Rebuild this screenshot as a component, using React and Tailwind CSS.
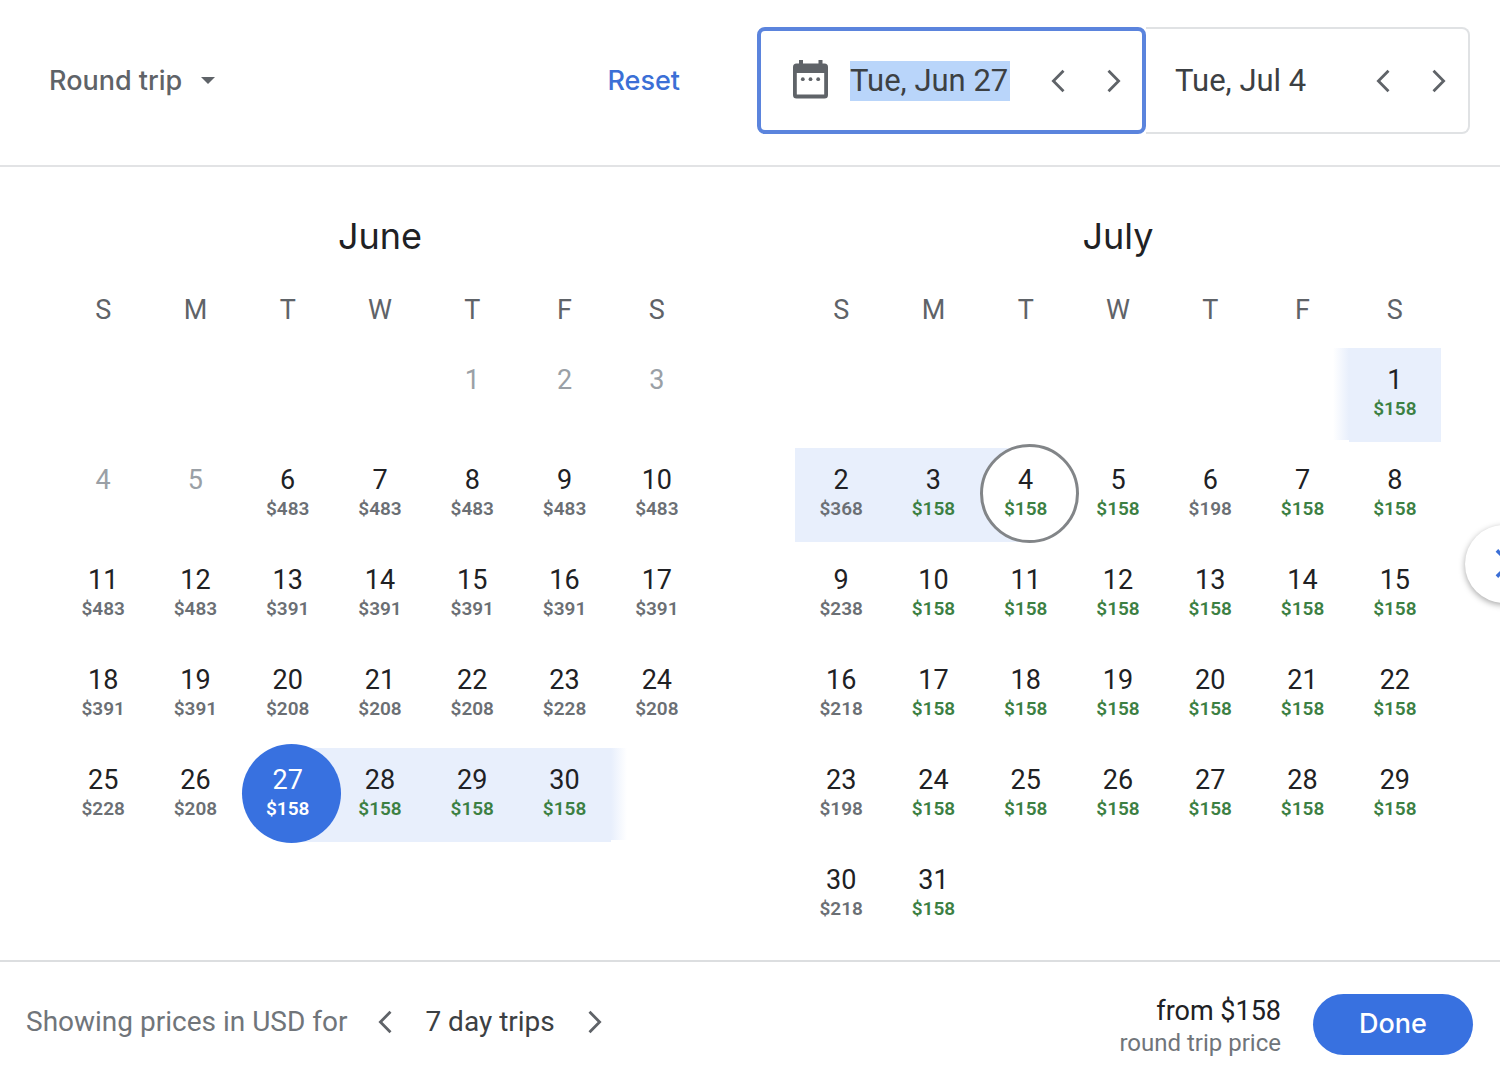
import { useState } from "react";
import clsx from "clsx";

const WEEKDAYS = ["S", "M", "T", "W", "T", "F", "S"];
const LOW_PRICE = 158;

// ── Price data ────────────────────────────────────────────────────────────────
const MONTHS = [
  {
    name: "June",
    startDay: 4,
    // null = date in the past, no price
    prices: [
      null, null, null, null, null, 483, 483, 483, 483, 483,
      483, 483, 391, 391, 391, 391, 391, 391, 391, 208,
      208, 208, 228, 208, 228, 208, 158, 158, 158, 158,
    ],
    departure: 27,
    range: [27, 30],
    fadeAfter: 30,
  },
  {
    name: "July",
    startDay: 6,
    prices: [
      158, 368, 158, 158, 158, 198, 158, 158, 238, 158,
      158, 158, 158, 158, 158, 218, 158, 158, 158, 158,
      158, 158, 198, 158, 158, 158, 158, 158, 158, 218,
      158,
    ],
    arrival: 4,
    range: [1, 4],
    fadeBefore: 1,
  },
];

function getWeeks(month) {
  const cells = [
    ...Array(month.startDay).fill(null),
    ...month.prices.map((price, i) => ({ day: i + 1, price })),
  ];
  while (cells.length % 7 !== 0) cells.push(null);

  const weeks = [];
  for (let i = 0; i < cells.length; i += 7) weeks.push(cells.slice(i, i + 7));
  return weeks;
}

// ── Icons ─────────────────────────────────────────────────────────────────────
function Chevron({ direction, className = "w-[14px] h-[24px]" }) {
  return (
    <svg
      viewBox="0 0 14 24"
      className={className}
      fill="none"
      stroke="currentColor"
      strokeWidth="2.8"
      aria-hidden="true"
    >
      <path
        d={direction === "left" ? "M12.5 1.8 2.4 12l10.1 10.2" : "M1.5 1.8 11.6 12 1.5 22.2"}
      />
    </svg>
  );
}

function CalendarIcon() {
  return (
    <svg viewBox="0 0 35 41" className="w-[35px] h-[41px] shrink-0 text-[#5f6368]" fill="currentColor" aria-hidden="true">
      <path
        fillRule="evenodd"
        d="M6 0h4v3.500h15.500V0h4v3.500h2A3.500 3.500 0 0 1 35 7v28a3.500 3.500 0 0 1-3.500 3.500h-28A3.500 3.500 0 0 1 0 35V7a3.500 3.500 0 0 1 3.500-3.500H6zM3.800 13v21.500h27.400V13z"
      />
      <circle cx="9.800" cy="19.200" r="1.900" />
      <circle cx="17.500" cy="19.200" r="1.900" />
      <circle cx="25.200" cy="19.200" r="1.900" />
    </svg>
  );
}

function StepButton({ direction, label }) {
  return (
    <button
      type="button"
      aria-label={label}
      className="flex items-center justify-center w-8 h-10 text-[#5f6368]"
    >
      <Chevron direction={direction} />
    </button>
  );
}

// ── Calendar ──────────────────────────────────────────────────────────────────
function DayCell({ cell, month }) {
  if (!cell) return <td className="p-0" />;

  const { day, price } = cell;
  const isDeparture = day === month.departure;
  const isArrival = day === month.arrival;
  const inRange = day >= month.range[0] && day <= month.range[1];

  return (
    <td className="p-0 pb-[6px]">
      <button
        type="button"
        disabled={price === null}
        className={clsx(
          "relative isolate flex flex-col items-center w-full h-[94px] pt-4",
          (isDeparture || isArrival) && "z-10",
          inRange && !isDeparture && !isArrival && "bg-[#e8effc]",
        )}
      >
        {isDeparture && (
          <>
            <span className="absolute -z-10 inset-y-0 left-1/2 right-0 bg-[#e8effc]" />
            <span className="absolute -z-10 -top-1 left-0 w-[99px] h-[99px] rounded-full bg-[#3871e0]" />
          </>
        )}
        {isArrival && (
          <>
            <span className="absolute -z-10 inset-y-0 left-0 right-1/2 bg-[#e8effc]" />
            <span className="absolute -z-10 -top-1 left-0 w-[99px] h-[99px] rounded-full bg-white border-[3px] border-[#828588]" />
          </>
        )}
        {day === month.fadeAfter && (
          <span className="absolute top-0 left-full w-4 h-[92px] bg-linear-to-r from-[#e8effc] to-white" />
        )}
        {day === month.fadeBefore && (
          <span className="absolute top-0 right-full w-4 h-[92px] bg-linear-to-l from-[#e8effc] to-white" />
        )}
        <span
          className={clsx(
            "text-[27px] leading-8",
            isDeparture ? "text-white" : price === null ? "text-[#9aa0a6]" : "text-[#202124]",
          )}
        >
          {day}
        </span>
        {price !== null && (
          <span
            className={clsx(
              "text-[19px] leading-[26px] font-semibold",
              isDeparture
                ? "text-white"
                : price === LOW_PRICE
                  ? "text-[#3c8043]"
                  : "text-[#6b6f74]",
            )}
          >
            ${price}
          </span>
        )}
      </button>
    </td>
  );
}

function Month({ month }) {
  return (
    <section className="flex-1 min-w-0">
      <h2
        id={month.name}
        className="text-center font-['Inter',sans-serif] text-[36px] leading-[48px] text-[#202124]"
      >
        {month.name}
      </h2>
      <table aria-labelledby={month.name} className="w-full table-fixed border-collapse">
        <thead>
          <tr>
            {WEEKDAYS.map((day, i) => (
              <th
                key={i}
                scope="col"
                className="p-0 pt-8 pb-5 text-[27px] leading-9 font-normal text-[#5f6368]"
              >
                {day}
              </th>
            ))}
          </tr>
        </thead>
        <tbody>
          {getWeeks(month).map((week, i) => (
            <tr key={i}>
              {week.map((cell, j) => (
                <DayCell key={j} cell={cell} month={month} />
              ))}
            </tr>
          ))}
        </tbody>
      </table>
    </section>
  );
}

// ── Main ──────────────────────────────────────────────────────────────────────
export default function App() {
  const [departure, setDeparture] = useState("Tue, Jun 27");
  const [arrival, setArrival] = useState("Tue, Jul 4");

  return (
    <div className="relative min-h-screen overflow-hidden bg-white font-['Roboto',sans-serif]">
      <header className="flex items-start pt-[27px] pb-[31px] pl-[49px] pr-[30px] border-b-2 border-[#e2e3e5]">
        <div className="flex flex-1 items-center justify-between h-[107px] pr-[77px] font-['Inter',sans-serif] font-medium text-[27px] leading-8">
          <label className="flex items-center gap-[18px] text-[#5f6368]">
            <select aria-label="Trip type" className="appearance-none outline-none">
              <option>Round trip</option>
            </select>
            <svg viewBox="0 0 14 7" className="w-[14px] h-[7px]" fill="currentColor" aria-hidden="true">
              <path d="M0 0h14L7 7z" />
            </svg>
          </label>
          <button type="button" className="text-[#3b6fd6]">
            Reset
          </button>
        </div>

        <div className="flex h-[107px] text-[31px] leading-[39px] text-[#3c4043]">
          <div className="flex items-center w-[389px] pl-8 pr-3 border-4 border-[#5b84dd] rounded-lg">
            <CalendarIcon />
            <input
              aria-label="Departure date"
              value={departure}
              onChange={(e) => setDeparture(e.target.value)}
              className="ml-[22px] w-[160px] h-10 bg-[#b9d5fa] outline-none"
            />
            <div className="ml-auto flex gap-6">
              <StepButton direction="left" label="Earlier departure" />
              <StepButton direction="right" label="Later departure" />
            </div>
          </div>
          <div className="flex items-center w-[324px] pl-[29px] pr-[13px] border-2 border-l-0 border-[#e0e2e4] rounded-r-lg">
            <input
              aria-label="Return date"
              value={arrival}
              onChange={(e) => setArrival(e.target.value)}
              className="w-[160px] h-10 outline-none"
            />
            <div className="ml-auto flex gap-6">
              <StepButton direction="left" label="Earlier return" />
              <StepButton direction="right" label="Later return" />
            </div>
          </div>
        </div>
      </header>

      <main className="relative flex gap-[92px] pt-[45px] pb-3 pl-[57px] pr-[59px]">
        {MONTHS.map((month) => (
          <Month key={month.name} month={month} />
        ))}
        <button
          type="button"
          aria-label="Next month"
          className="absolute top-1/2 -translate-y-1/2 -right-[43px] flex items-center justify-center w-[78px] h-[78px] rounded-full bg-white text-[#3b6fd6] shadow-[0_2px_6px_rgba(0,0,0,0.35)]"
        >
          <Chevron direction="right" className="w-[18px] h-[31px]" />
        </button>
      </main>

      <footer className="flex items-center justify-between pt-[29px] pb-5 pl-[26px] pr-[27px] border-t-2 border-[#dcdee0]">
        <div className="flex items-center pb-1 text-[28px] leading-8">
          <span className="text-[#70757a]">Showing prices in USD for</span>
          <div className="ml-[22px] flex items-center gap-6 text-[#3c4043]">
            <StepButton direction="left" label="Shorter trip" />
            <span>7 day trips</span>
            <StepButton direction="right" label="Longer trip" />
          </div>
        </div>
        <div className="flex items-center gap-8">
          <div className="pt-[2px] text-right">
            <p className="text-[27px] leading-9 text-[#202124]">from $158</p>
            <p className="text-[24px] leading-7 text-[#70757a]">round trip price</p>
          </div>
          <button
            type="button"
            className="w-[160px] h-[61px] rounded-full bg-[#3871e0] text-white font-['Inter',sans-serif] font-medium text-[27px]"
          >
            Done
          </button>
        </div>
      </footer>
    </div>
  );
}
